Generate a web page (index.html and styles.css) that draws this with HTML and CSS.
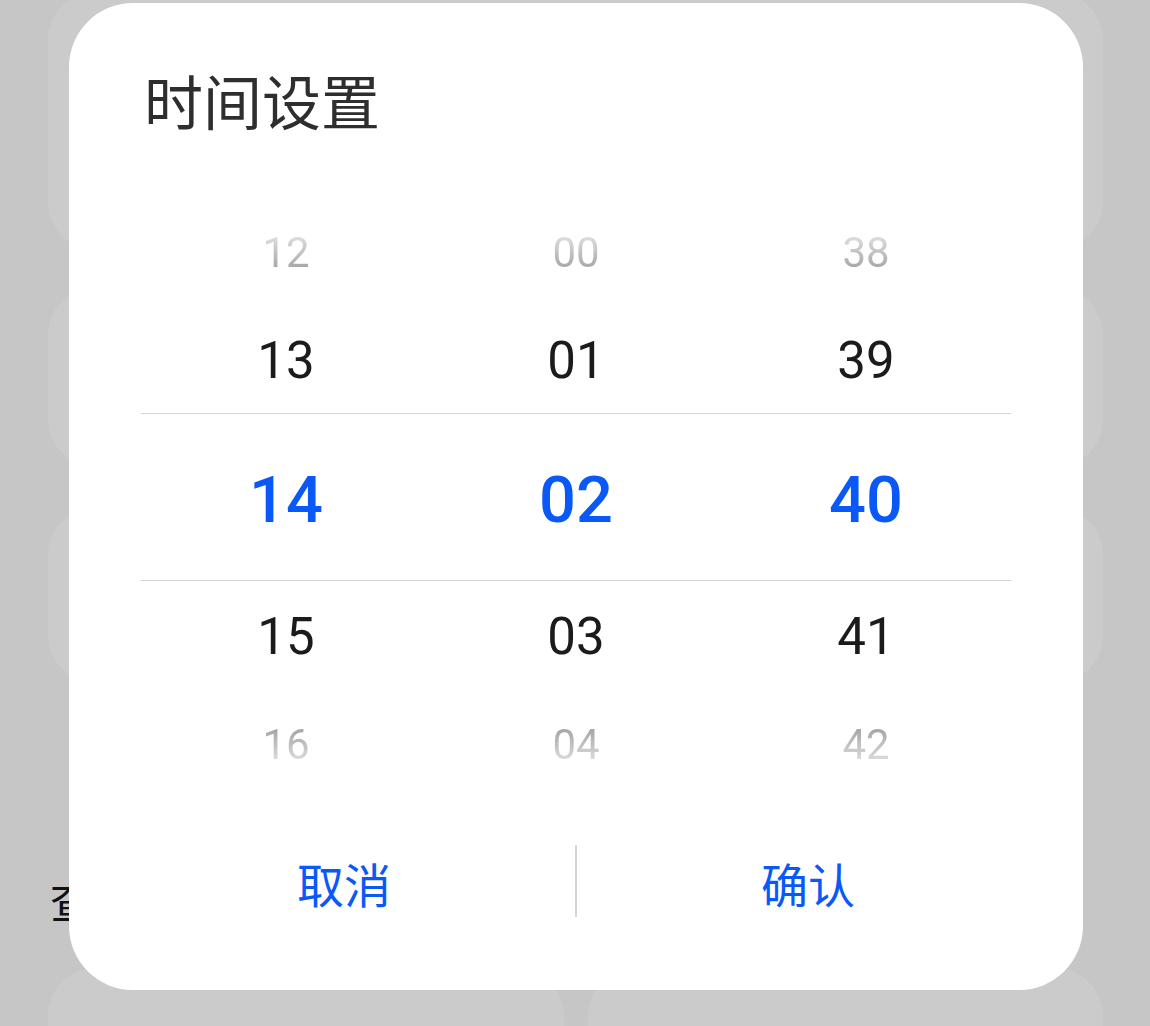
FILE: index.html
```html
<!DOCTYPE html>
<html lang="zh">
<head>
<meta charset="utf-8">
<title>时间设置</title>
<link rel="stylesheet" href="styles.css">
</head>
<body>
<div class="bg">
  <div class="card card-1"></div>
  <div class="card card-2"></div>
  <div class="card card-3"></div>
  <div class="label">查看</div>
  <div class="bottom-row">
    <div class="card card-half"></div>
    <div class="card card-half"></div>
  </div>
</div>

<div class="dialog">
  <h1 class="title">时间设置</h1>
  <div class="picker">
    <div class="row row-far row-top"><span>12</span><span>00</span><span>38</span></div>
    <div class="row row-near"><span>13</span><span>01</span><span>39</span></div>
    <div class="row row-sel"><span>14</span><span>02</span><span>40</span></div>
    <div class="row row-near"><span>15</span><span>03</span><span>41</span></div>
    <div class="row row-far row-bottom"><span>16</span><span>04</span><span>42</span></div>
  </div>
  <div class="actions">
    <button class="btn">取消</button>
    <div class="sep"></div>
    <button class="btn">确认</button>
  </div>
</div>
</body>
</html>
```

FILE: styles.css
```css
html, body {
  margin: 0;
  padding: 0;
}
body {
  width: 1150px;
  height: 1026px;
  overflow: hidden;
  background: #c6c6c6;
  position: relative;
  font-family: "Noto Sans CJK SC", "Noto Sans", sans-serif;
}

/* background page */
.bg {
  display: flex;
  flex-direction: column;
  padding: 0 47px 0 48px;
  margin-top: -8px;
}
.card {
  background: #cbcbcb;
  border-radius: 48px;
}
.card-1 { height: 258px; }
.card-2 { height: 180px; margin-top: 37px; }
.card-3 { height: 176px; margin-top: 40px; }
.label {
  margin-top: 195px;
  margin-left: 2px;
  font-size: 44px;
  line-height: 44px;
  color: #111;
}
.bottom-row {
  display: flex;
  gap: 24px;
  margin-top: 46px;
}
.card-half {
  flex: 1;
  height: 58px;
  border-radius: 48px 48px 0 0;
}

/* dialog */
.dialog {
  position: absolute;
  left: 69px;
  top: 3px;
  width: 1014px;
  height: 987px;
  box-sizing: border-box;
  background: #fff;
  border-radius: 64px;
  display: flex;
  flex-direction: column;
  padding: 0 44px;
}
.title {
  margin: 68px 0 0 31px;
  font-size: 59px;
  line-height: 58px;
  font-weight: 400;
  color: #2e2e2e;
}
.picker {
  margin: 68px 28px 0;
  display: flex;
  flex-direction: column;
  font-family: Roboto, "Noto Sans", sans-serif;
}
.row {
  display: grid;
  grid-template-columns: 1fr 1fr 1fr;
  text-align: center;
  box-sizing: border-box;
}
.row-far {
  height: 108px;
  padding-top: 4px;
  line-height: 104px;
  font-size: 42px;
}
.row-far span {
  color: transparent;
  -webkit-background-clip: text;
  background-clip: text;
  justify-self: center;
}
.row-top span {
  background-image: linear-gradient(to bottom, #dcdcdc 35%, #a6a6a6 65%);
}
.row-bottom span {
  background-image: linear-gradient(to bottom, #a6a6a6 35%, #dcdcdc 65%);
}
.row-near {
  height: 108px;
  padding-top: 4px;
  line-height: 104px;
  font-size: 51px;
  color: #1b1b1b;
}
.row-sel {
  height: 168px;
  padding-top: 6px;
  line-height: 160px;
  font-size: 65px;
  font-weight: 500;
  color: #0a59f7;
  border-top: 1px solid #d6d6d6;
  border-bottom: 1px solid #d6d6d6;
}

.actions {
  margin-top: 48px;
  display: flex;
  align-items: center;
  height: 72px;
}
.btn {
  flex: 1;
  height: 72px;
  border: 0;
  background: transparent;
  padding: 2px 0 0;
  font-family: "Noto Sans CJK SC", sans-serif;
  font-size: 47px;
  font-weight: 400;
  color: #0a59f7;
}
.sep {
  width: 2px;
  height: 72px;
  background: #d3d3d3;
}
```
